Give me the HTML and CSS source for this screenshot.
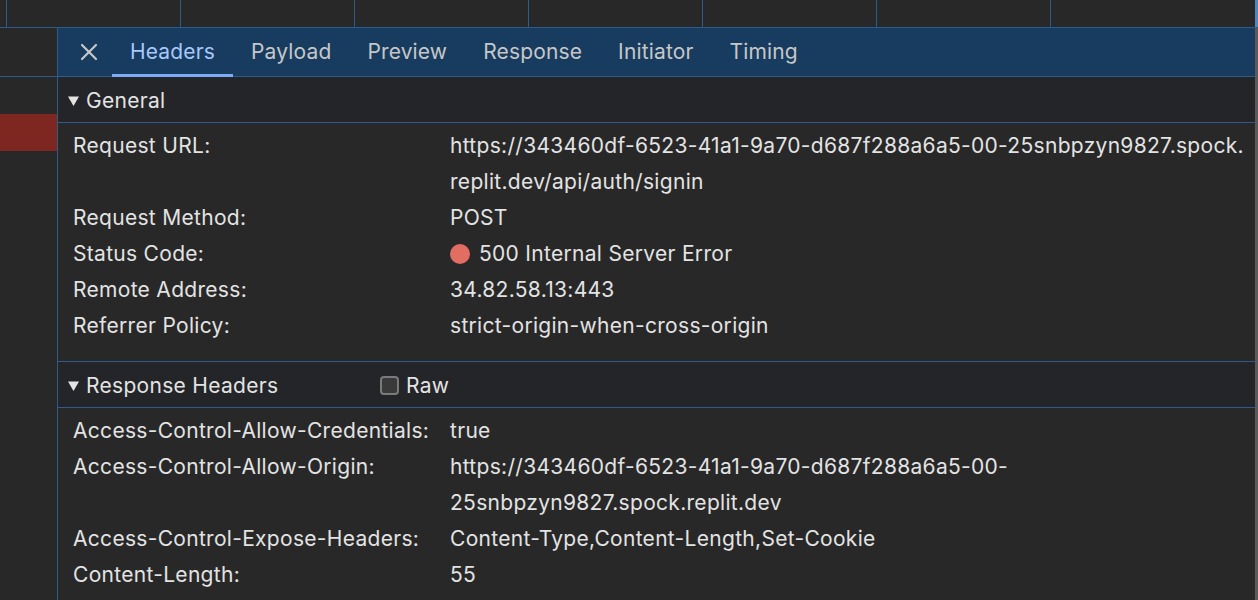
FILE: index.html
```html
<!DOCTYPE html>
<html>
<head>
<meta charset="utf-8">
<link rel="stylesheet" href="styles.css">
</head>
<body>
<div class="strip">
  <div class="cell first"></div>
  <div class="cell"></div>
  <div class="cell"></div>
  <div class="cell"></div>
  <div class="cell"></div>
  <div class="cell"></div>
  <div class="cell"></div>
  <div class="cell last"></div>
</div>
<div class="main">
  <div class="leftcol">
    <div class="lc-head"></div>
    <div class="lc-row"></div>
    <div class="lc-row err"></div>
  </div>
  <div class="panel">
    <div class="tabs">
      <div class="close">
        <svg width="18" height="18" viewBox="0 0 18 18"><path d="M2 2 L16 16 M16 2 L2 16" stroke="#c7c7c7" stroke-width="2.2" stroke-linecap="round"/></svg>
      </div>
      <div class="tab active">Headers</div>
      <div class="tab">Payload</div>
      <div class="tab">Preview</div>
      <div class="tab">Response</div>
      <div class="tab">Initiator</div>
      <div class="tab">Timing</div>
    </div>
    <div class="section">
      <div class="sec-head">
        <svg class="tri" width="11" height="10" viewBox="0 0 11 10"><polygon points="0,0.5 11,0.5 5.5,10" fill="#e3e3e3"/></svg>
        <span>General</span>
      </div>
      <div class="rows">
        <div class="label">Request URL:</div>
        <div class="value">https://343460df-6523-41a1-9a70-d687f288a6a5-00-25snbpzyn9827.spock.<br>replit.dev/api/auth/signin</div>
        <div class="label">Request Method:</div>
        <div class="value">POST</div>
        <div class="label">Status Code:</div>
        <div class="value status"><span class="dot"></span>500 Internal Server Error</div>
        <div class="label">Remote Address:</div>
        <div class="value">34.82.58.13:443</div>
        <div class="label">Referrer Policy:</div>
        <div class="value">strict-origin-when-cross-origin</div>
      </div>
    </div>
    <div class="section">
      <div class="sec-head">
        <svg class="tri" width="11" height="10" viewBox="0 0 11 10"><polygon points="0,0.5 11,0.5 5.5,10" fill="#e3e3e3"/></svg>
        <span class="rh-title">Response Headers</span>
        <span class="checkbox"></span>
        <span>Raw</span>
      </div>
      <div class="rows">
        <div class="label">Access-Control-Allow-Credentials:</div>
        <div class="value">true</div>
        <div class="label">Access-Control-Allow-Origin:</div>
        <div class="value">https://343460df-6523-41a1-9a70-d687f288a6a5-00-<br>25snbpzyn9827.spock.replit.dev</div>
        <div class="label">Access-Control-Expose-Headers:</div>
        <div class="value">Content-Type,Content-Length,Set-Cookie</div>
        <div class="label">Content-Length:</div>
        <div class="value">55</div>
      </div>
    </div>
  </div>
</div>
</body>
</html>
```

FILE: styles.css
```css
* { box-sizing: border-box; }
html, body { margin: 0; padding: 0; }
body {
  background: #282828;
  color: #e3e3e3;
  font-family: Inter, "Noto Sans", sans-serif;
  font-size: 21px;
  letter-spacing: 0.3px;
  width: 1258px;
  height: 600px;
  overflow: hidden;
}
.strip {
  display: flex;
  height: 28px;
  border-bottom: 1px solid #2d5b8a;
  background: #282828;
}
.cell {
  width: 174px;
  border-left: 1px solid #2d5b8a;
}
.cell.first { width: 6px; border-left: none; }
.cell.last { flex: 1; border-right: 3px solid #4f86c0; }
.main {
  display: flex;
  height: 572px;
}
.leftcol {
  width: 58px;
  border-right: 1px solid #2d5b8a;
  background: #282828;
}
.lc-head { height: 49px; border-bottom: 1px solid #2d5b8a; }
.lc-row { height: 37px; }
.lc-row.err { background: #7e2720; }
.panel {
  flex: 1;
  border-right: 3px solid #5a5a5a;
  background: #282828;
}
.tabs {
  display: flex;
  align-items: stretch;
  height: 49px;
  background: #173c60;
  border-bottom: 1px solid #2d5b8a;
  letter-spacing: 0.15px;
}
.close {
  width: 54px;
  display: flex;
  align-items: center;
  justify-content: center;
  padding-left: 8px;
}
.tab {
  padding: 0 18px 1px;
  display: flex;
  align-items: center;
  color: #c7c7c7;
  position: relative;
}
.tab.active { color: #a8c7fa; }
.tab.active::after {
  content: "";
  position: absolute;
  left: 0; right: 0; bottom: -1px;
  height: 3px;
  background: #7cacf8;
}
.section { border-bottom: 1px solid #2d5b8a; }
.section:last-child { border-bottom: none; }
.sec-head {
  height: 46px;
  display: flex;
  align-items: center;
  padding-left: 10px;
  padding-top: 2px;
  background: #242528;
  border-bottom: 1px solid #2d5b8a;
}
.tri { margin-right: 7px; }
.rh-title { width: 294px; }
.checkbox {
  width: 19px; height: 19px;
  border: 2px solid #7a7a7a;
  border-radius: 4px;
  background: #3a3a3a;
  margin-right: 7px;
}
.rows {
  display: grid;
  grid-template-columns: 377px 1fr;
  padding: 5px 0 17px 15px;
  line-height: 36px;
}
.value { white-space: nowrap; }
.status { display: flex; align-items: center; }
.dot {
  width: 20px; height: 20px;
  border-radius: 50%;
  background: #e26d63;
  margin-right: 9px;
}
```
